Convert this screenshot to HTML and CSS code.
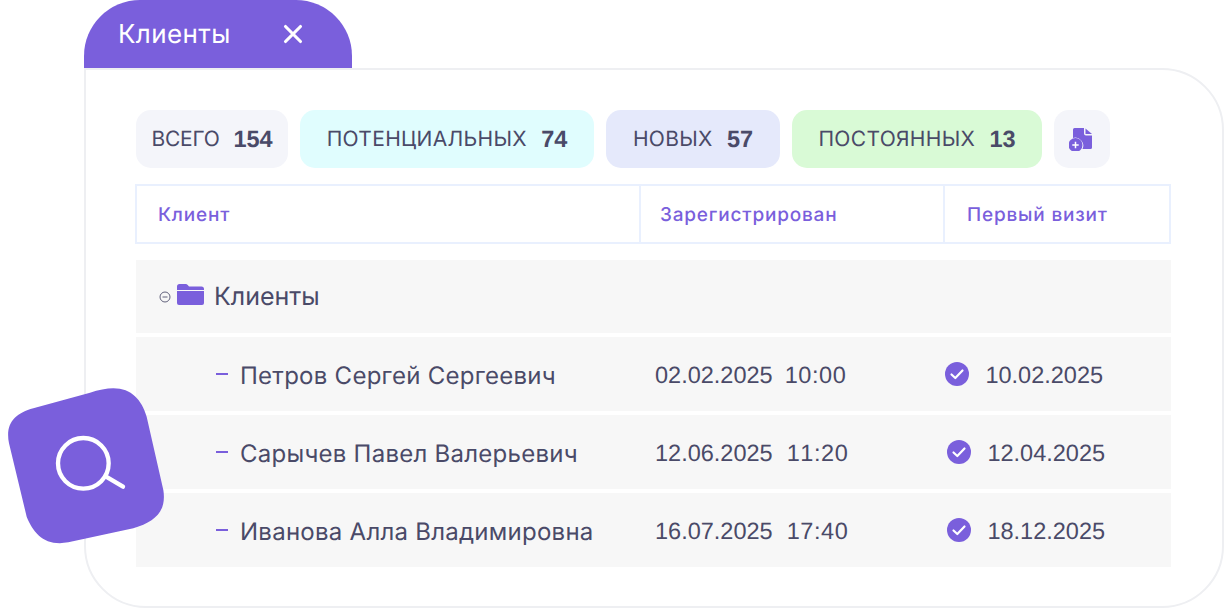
FILE: index.html
```html
<!DOCTYPE html>
<html lang="ru">
<head>
<meta charset="utf-8">
<title>Клиенты</title>
<link rel="stylesheet" href="styles.css">
</head>
<body>
<div class="stage">
  <div class="tab">
    <span class="tab-title">Клиенты</span>
    <svg class="tab-close" width="20" height="20" viewBox="0 0 20 20"><path d="M2.500 2.500 17.500 17.500M17.500 2.500 2.500 17.500" stroke="#fff" stroke-width="3.100" stroke-linecap="round"/></svg>
  </div>
  <main class="card">
    <div class="pills">
      <div class="pill pill-all">ВСЕГО <b>154</b></div>
      <div class="pill pill-potential">ПОТЕНЦИАЛЬНЫХ <b>74</b></div>
      <div class="pill pill-new">НОВЫХ <b>57</b></div>
      <div class="pill pill-regular">ПОСТОЯННЫХ <b>13</b></div>
      <div class="pill pill-icon">
        <svg width="26" height="24" viewBox="0 0 26 24"><path fill="#7a5fdc" d="M5.500 1h9.500v5.500a2 2 0 0 0 2 2h6V20.500a1.500 1.500 0 0 1-1.500 1.500H13.500a8 8 0 0 0-9.500-11V2.500A1.500 1.500 0 0 1 5.500 1Z"/><path fill="#7a5fdc" d="M16.500 1.500 23 7H16.500Z"/><circle cx="6.500" cy="18" r="7" fill="#7a5fdc"/><path d="M6.500 14.800v6.400M3.300 18h6.400" stroke="#fff" stroke-width="1.500"/></svg>
      </div>
    </div>
    <div class="thead">
      <div class="th th-client">Клиент</div>
      <div class="th th-reg">Зарегистрирован</div>
      <div class="th th-first">Первый визит</div>
    </div>
    <div class="rows">
      <div class="row row-group">
        <svg class="toggle" width="12" height="12" viewBox="0 0 12 12"><circle cx="6" cy="6" r="5" fill="none" stroke="#62627c" stroke-width="1"/><path d="M3.500 6h5" stroke="#62627c" stroke-width="1"/></svg>
        <svg class="folder" width="27" height="22" viewBox="0 0 27 22"><path fill="#7a5fdc" d="M0 2.500A2.500 2.500 0 0 1 2.500 0h6.200c.8 0 1.500.4 2 1l1.300 1.500h12.500A2.500 2.500 0 0 1 27 5v1H0Z"/><path fill="#7a5fdc" d="M0 7h27v12a2 2 0 0 1-2 2H2a2 2 0 0 1-2-2Z"/></svg>
        <span class="group-name">Клиенты</span>
      </div>
      <div class="row">
        <span class="dash"></span><span class="name">Петров Сергей Сергеевич</span>
        <span class="date">02.02.2025</span><span class="time">10:00</span>
        <svg class="check" width="24" height="24" viewBox="0 0 24 24"><circle cx="12" cy="12" r="12" fill="#7a5fdc"/><path d="M6.500 12.500 10.300 16 17.500 8.500" fill="none" stroke="#fff" stroke-width="2.200" stroke-linecap="round" stroke-linejoin="round"/></svg>
        <span class="visit">10.02.2025</span>
      </div>
      <div class="row row-shift">
        <span class="dash"></span><span class="name">Сарычев Павел Валерьевич</span>
        <span class="date">12.06.2025</span><span class="time">11:20</span>
        <svg class="check" width="24" height="24" viewBox="0 0 24 24"><circle cx="12" cy="12" r="12" fill="#7a5fdc"/><path d="M6.500 12.500 10.300 16 17.500 8.500" fill="none" stroke="#fff" stroke-width="2.200" stroke-linecap="round" stroke-linejoin="round"/></svg>
        <span class="visit">12.04.2025</span>
      </div>
      <div class="row row-shift">
        <span class="dash"></span><span class="name">Иванова Алла Владимировна</span>
        <span class="date">16.07.2025</span><span class="time">17:40</span>
        <svg class="check" width="24" height="24" viewBox="0 0 24 24"><circle cx="12" cy="12" r="12" fill="#7a5fdc"/><path d="M6.500 12.500 10.300 16 17.500 8.500" fill="none" stroke="#fff" stroke-width="2.200" stroke-linecap="round" stroke-linejoin="round"/></svg>
        <span class="visit">18.12.2025</span>
      </div>
    </div>
  </main>
  <svg class="badge" width="180" height="170" viewBox="0 0 540 510">
    <path fill="#7a5fdc" d="M340 25C395 25 425 60 440 110L490 330C500 395 465 425 400 445L205 487C135 500 100 460 80 410L27 190C15 130 45 100 100 85L270 38C295 30 320 25 340 25Z"/>
    <circle cx="250" cy="250" r="76" fill="none" stroke="#fff" stroke-width="13"/>
    <path d="M322 292 369 320" stroke="#fff" stroke-width="13" stroke-linecap="round"/>
  </svg>
</div>
</body>
</html>
```
FILE: styles.css
```css
* { box-sizing: border-box; }
html, body { margin: 0; padding: 0; }
body { width: 1224px; height: 608px; overflow: hidden; background: #fff; font-family: Inter, "Noto Sans", sans-serif; color: #4a4a68; text-rendering: geometricPrecision; }
.stage { position: relative; width: 1224px; height: 608px; padding-left: 84px; }
.tab { width: 268px; height: 68px; background: #7a5fdc; border-radius: 56px 56px 0 0; display: flex; align-items: center; padding: 0 0 0 34px; color: #fff; }
.tab-title { font-size: 26px; width: 165px; letter-spacing: .4px; margin-top: 1px; }
.tab-close { flex: none; }
.card { width: 1140px; height: 540px; border: 2px solid #eeeff2; border-radius: 0 62px 62px 62px; padding: 40px 50px 0 50px; background: #fff; }
.pills { display: flex; gap: 12px; height: 58px; }
.pill { height: 58px; border-radius: 15px; display: flex; align-items: center; justify-content: center; font-size: 21px; letter-spacing: .32px; white-space: pre; gap: 8px; }
.pill b { font-family: "Liberation Sans", Arial, sans-serif; font-size: 23.500px; font-weight: 700; letter-spacing: 0; font-kerning: none; }
.pill-all { width: 152px; background: #f4f5fa; letter-spacing: -.2px; }
.pill-potential { width: 294px; background: #e0fdfe; }
.pill-new { width: 174px; background: #e5e9fb; }
.pill-regular { width: 250px; background: #d9fad6; }
.pill-icon { width: 56px; background: #f4f5fa; }
.thead { display: grid; grid-template-columns: 502px 304px 226px; width: 1036px; height: 60px; margin: 16px 0 0 -1px; border: 2px solid #e9f0fe; }
.th { display: flex; align-items: center; font-size: 19px; font-weight: 500; color: #7a5fdc; letter-spacing: .8px; }
.th-client { padding-left: 21px; }
.th-reg { padding-left: 19px; border-left: 2px solid #e9f0fe; }
.th-first { padding-left: 22px; border-left: 2px solid #e9f0fe; }
.rows { display: flex; flex-direction: column; gap: 4px; margin-top: 16px; width: 1035px; }
.row { height: 74px; background: #f7f7f7; display: flex; align-items: center; padding: 2px 0 0 80px; font-family: "Liberation Sans", Arial, sans-serif; font-size: 23.500px; font-kerning: none; }
.row-group { height: 73px; padding: 2px 0 0 23px; }
.toggle { margin-right: 6px; margin-top: -2px; }
.folder { margin-right: 10px; margin-top: -6px; }
.group-name { font-family: Inter, "Noto Sans", sans-serif; font-size: 25px; font-kerning: auto; margin-top: -1px; }
.dash { width: 12px; height: 2px; background: #7a5fdc; margin: 0 12px 2px 0; }
.name { width: 415px; font-family: Inter, "Noto Sans", sans-serif; font-size: 24px; font-kerning: auto; letter-spacing: .26px; }
.date { margin-right: 12px; }
.row-shift .date { margin-right: 14px; }
.time { margin-right: 99px; letter-spacing: .6px; }
.check { margin: 0 16px 2px 0; }
.badge { position: absolute; left: 0; top: 380px; }
```
